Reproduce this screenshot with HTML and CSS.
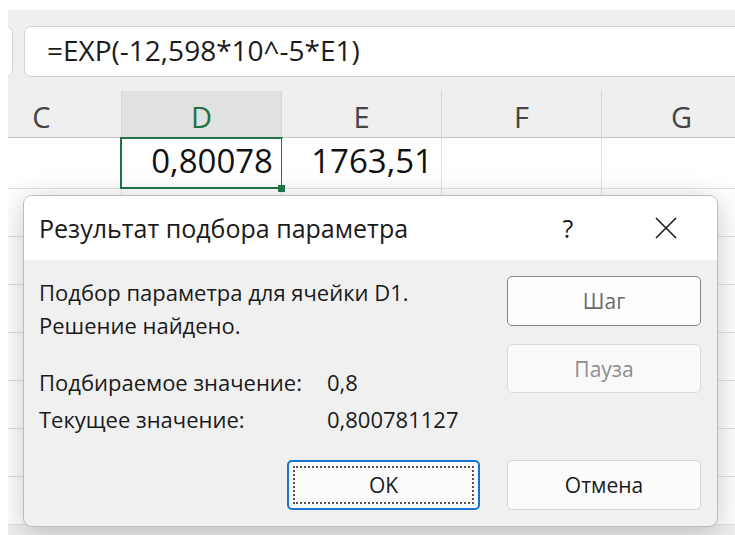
FILE: index.html
```html
<!DOCTYPE html>
<html lang="ru">
<head>
<meta charset="utf-8">
<title>Подбор параметра</title>
<link rel="stylesheet" href="styles.css">
</head>
<body>
<div class="app">
  <div class="formula-bar">
    <div class="name-box"></div>
    <div class="formula-input">=EXP(-12,598*10^-5*E1)</div>
  </div>

  <div class="sheet">
    <div class="grid">
      <div class="hdr">C</div>
      <div class="hdr active">D</div>
      <div class="hdr">E</div>
      <div class="hdr">F</div>
      <div class="hdr">G</div>

      <div class="cell"></div>
      <div class="cell num selected">0,80078<span class="fill-handle"></span></div>
      <div class="cell num">1763,51</div>
      <div class="cell"></div>
      <div class="cell"></div>

      <div class="cell"></div><div class="cell"></div><div class="cell"></div><div class="cell"></div><div class="cell"></div>
      <div class="cell"></div><div class="cell"></div><div class="cell"></div><div class="cell"></div><div class="cell"></div>
      <div class="cell"></div><div class="cell"></div><div class="cell"></div><div class="cell"></div><div class="cell"></div>
      <div class="cell"></div><div class="cell"></div><div class="cell"></div><div class="cell"></div><div class="cell"></div>
      <div class="cell"></div><div class="cell"></div><div class="cell"></div><div class="cell"></div><div class="cell"></div>
      <div class="cell"></div><div class="cell"></div><div class="cell"></div><div class="cell"></div><div class="cell"></div>
      <div class="cell"></div><div class="cell"></div><div class="cell"></div><div class="cell"></div><div class="cell"></div>
    </div>
  </div>

  <div class="dialog" role="dialog" aria-label="Результат подбора параметра">
    <div class="dialog-title">
      <span class="title-text">Результат подбора параметра</span>
      <span class="help">?</span>
      <span class="close">
        <svg width="22" height="22" viewBox="0 0 22 22"><path d="M1 1 L21 21 M21 1 L1 21" stroke="#1b1b1b" stroke-width="1.6" fill="none"/></svg>
      </span>
    </div>
    <div class="dialog-body">
      <div class="top">
        <div class="info">
          <p class="line">Подбор параметра для ячейки D1.</p>
          <p class="line">Решение найдено.</p>
          <div class="values">
            <span>Подбираемое значение:</span><span>0,8</span>
            <span>Текущее значение:</span><span>0,800781127</span>
          </div>
        </div>
        <div class="side-buttons">
          <button class="btn step">Шаг</button>
          <button class="btn disabled">Пауза</button>
        </div>
      </div>
      <div class="footer">
        <button class="btn primary"><span class="focus-ring">OK</span></button>
        <button class="btn">Отмена</button>
      </div>
    </div>
  </div>
</div>
</body>
</html>
```

FILE: styles.css
```css
html, body {
  margin: 0;
  padding: 0;
  background: #ffffff;
}

.app {
  position: relative;
  margin: 10px 0 0 8px;
  height: 525px;
  overflow: hidden;
  background: #efefef;
  font-family: "Open Sans", "Noto Sans", sans-serif;
}

/* formula bar */
.formula-bar {
  display: flex;
  padding-top: 16px;
  height: 51px;
}

.name-box {
  width: 40px;
  margin-left: -35px;
  background: #fff;
  border: 1px solid #d2d2d2;
  border-radius: 7px;
  box-sizing: border-box;
}

.formula-input {
  flex: 1;
  margin-left: 11px;
  margin-right: -20px;
  background: #fff;
  border: 1px solid #d2d2d2;
  border-radius: 7px;
  box-sizing: border-box;
  padding-left: 22px;
  font-size: 28px;
  line-height: 47px;
  color: #1c1c1c;
}

/* sheet */
.sheet {
  margin-top: 14px;
  margin-left: -46px;
}

.grid {
  display: grid;
  grid-template-columns: repeat(5, 160px);
  grid-template-rows: 47px 51px repeat(7, 48px);
}

.hdr {
  display: flex;
  align-items: center;
  justify-content: center;
  font-size: 29px;
  color: #454545;
  border-right: 1px solid #d6d6d6;
  border-bottom: 1px solid #c4c4c4;
  padding-top: 4px;
  box-sizing: border-box;
}

.hdr.active {
  background: #e1e1e1;
  color: #217346;
}

.cell {
  position: relative;
  background: #fff;
  border-right: 1px solid #e1e1e1;
  border-bottom: 1px solid #e1e1e1;
  box-sizing: border-box;
}

.cell.num {
  text-align: right;
  padding-right: 8px;
  font-size: 33px;
  line-height: 46px;
  color: #111;
}

.cell.selected::after {
  content: "";
  position: absolute;
  left: -2px;
  right: -2px;
  top: -1px;
  bottom: -1px;
  border: 2px solid #217346;
}

.fill-handle {
  position: absolute;
  right: -4px;
  bottom: -4px;
  width: 7px;
  height: 7px;
  background: #217346;
  z-index: 1;
}

/* dialog */
.dialog {
  position: absolute;
  left: 15px;
  top: 185px;
  width: 695px;
  height: 332px;
  box-sizing: border-box;
  border: 1px solid #bcbcbc;
  border-radius: 9px;
  background: #f0f0f0;
  overflow: hidden;
  box-shadow: 0 6px 30px rgba(0, 0, 0, 0.22);
  color: #1a1a1a;
}

.dialog-title {
  display: flex;
  align-items: center;
  height: 64px;
  background: #fff;
  padding-left: 15px;
}

.title-text {
  flex: 1;
  font-size: 25px;
}

.help {
  font-size: 25px;
  width: 22px;
  text-align: center;
  margin-right: 76px;
}

.close {
  display: flex;
  margin-right: 40px;
}

.dialog-body {
  padding: 16px 16px 0 15px;
}

.top {
  display: flex;
  justify-content: space-between;
}

.info {
  font-size: 22px;
}

.line {
  margin: 0;
  line-height: 33px;
}

.values {
  display: grid;
  grid-template-columns: 288px auto;
  line-height: 37px;
  margin-top: 22px;
}

.side-buttons {
  display: flex;
  flex-direction: column;
  gap: 18px;
}

.btn {
  width: 194px;
  height: 50px;
  box-sizing: border-box;
  border: 1px solid #d6d6d6;
  border-radius: 5px;
  background: #fbfbfb;
  font-family: "Open Sans", "Noto Sans", sans-serif;
  font-size: 21px;
  color: #1a1a1a;
  padding: 0;
}

.btn.step {
  border-color: #858585;
  background: #fdfdfd;
  color: #6a6a6a;
}

.btn.disabled {
  height: 49px;
  color: #8e8e8e;
  background: #f9f9f9;
  border-color: #dcdcdc;
}

.footer {
  display: flex;
  justify-content: flex-end;
  gap: 27px;
  margin-top: 22px;
}

.btn.primary {
  width: 193px;
  border: 2px solid #1a73d0;
  padding: 4px;
}

.focus-ring {
  display: flex;
  align-items: center;
  justify-content: center;
  height: 100%;
  border: 2px dotted #555;
  box-sizing: border-box;
}
```
